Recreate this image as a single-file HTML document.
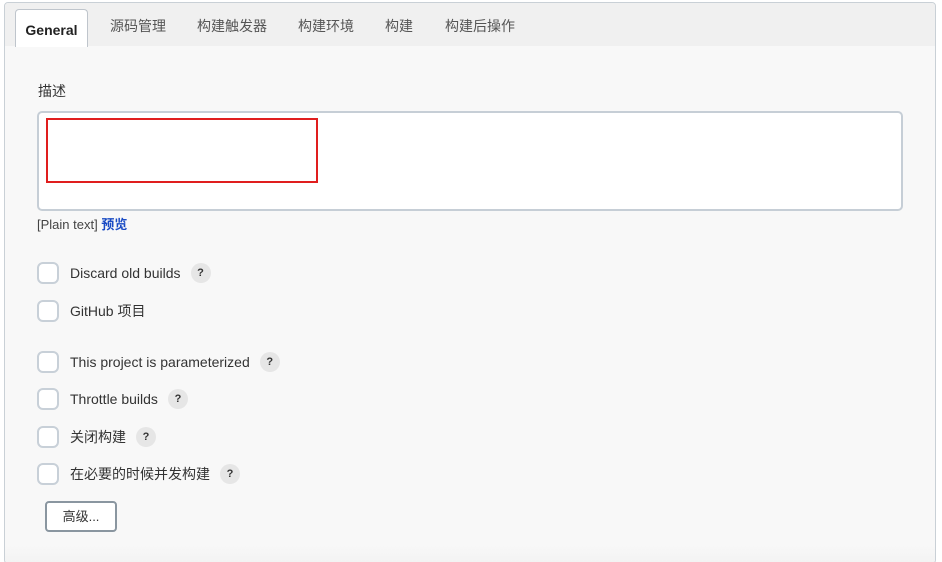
<!DOCTYPE html>
<html style="width:942px;height:562px;overflow:hidden"><head><meta charset="utf-8"><style>
*{box-sizing:border-box;margin:0;padding:0}
body{width:942px;height:562px;background:#fff;font-family:"Liberation Sans","Noto Sans CJK SC",sans-serif;color:#333;font-size:14px;position:relative;overflow:hidden}
.panel{position:absolute;left:4px;top:2px;width:932px;height:562px;border:1px solid #c9d0d6;border-radius:4px;background:#f8f8f8;overflow:hidden}
.tabs{position:absolute;left:0;top:0;width:100%;height:43px;background:#f0f0f0}
.tab{position:absolute;top:13px;font-size:14px;color:#555}
.act{position:absolute;left:10px;top:6px;width:73px;height:38px;background:#fff;border:1px solid #bfc5cc;border-bottom:none;border-radius:4px 4px 0 0;font-weight:bold;color:#222;text-align:center;padding-top:12px;font-size:14px}
.abs{position:absolute}
.ta{position:absolute;left:32px;top:108px;width:866px;height:100px;background:#fff;border:2px solid #c6ced6;border-radius:5px}
.red{position:absolute;left:41px;top:115px;width:272px;height:65px;border:2px solid #e01e1e}
.row{position:absolute;left:32px;height:22px;display:flex;align-items:center}
.cb{width:22px;height:22px;border:2px solid #c8d0d8;border-radius:6px;background:#fff;margin-right:11px}
.q{display:inline-block;width:20px;height:20px;border-radius:10px;background:#e6e6e6;font-size:11px;font-weight:bold;text-align:center;line-height:20px;margin-left:10px;color:#333}
.btn{position:absolute;left:40px;top:498px;width:72px;height:31px;border:2px solid #8a96a0;border-radius:4px;background:#fff;font-size:13px;text-align:center;line-height:27px}
.shadow{position:absolute;left:0;top:542px;width:100%;height:30px;background:linear-gradient(#f8f8f8,#efefef)}
</style></head><body>
<div class="panel">
<div class="tabs">
<div class="act">General</div>
<div class="tab" style="left:105px">源码管理</div>
<div class="tab" style="left:192px">构建触发器</div>
<div class="tab" style="left:293px">构建环境</div>
<div class="tab" style="left:380px">构建</div>
<div class="tab" style="left:440px">构建后操作</div>
</div>
<div class="abs" style="left:33px;top:78px">描述</div>
<div class="ta"></div>
<div class="red"></div>
<div class="abs" style="left:32px;top:211px;font-size:13px;color:#444">[Plain text] <span style="color:#1a4bc4;font-weight:bold">预览</span></div>
<div class="row" style="top:259px"><div class="cb"></div>Discard old builds<span class="q">?</span></div>
<div class="row" style="top:297px"><div class="cb"></div>GitHub 项目</div>
<div class="row" style="top:348px"><div class="cb"></div>This project is parameterized<span class="q">?</span></div>
<div class="row" style="top:385px"><div class="cb"></div>Throttle builds<span class="q">?</span></div>
<div class="row" style="top:423px"><div class="cb"></div>关闭构建<span class="q">?</span></div>
<div class="row" style="top:460px"><div class="cb"></div>在必要的时候并发构建<span class="q">?</span></div>
<div class="btn">高级...</div>
<div class="shadow"></div>
</div>
</body></html>
